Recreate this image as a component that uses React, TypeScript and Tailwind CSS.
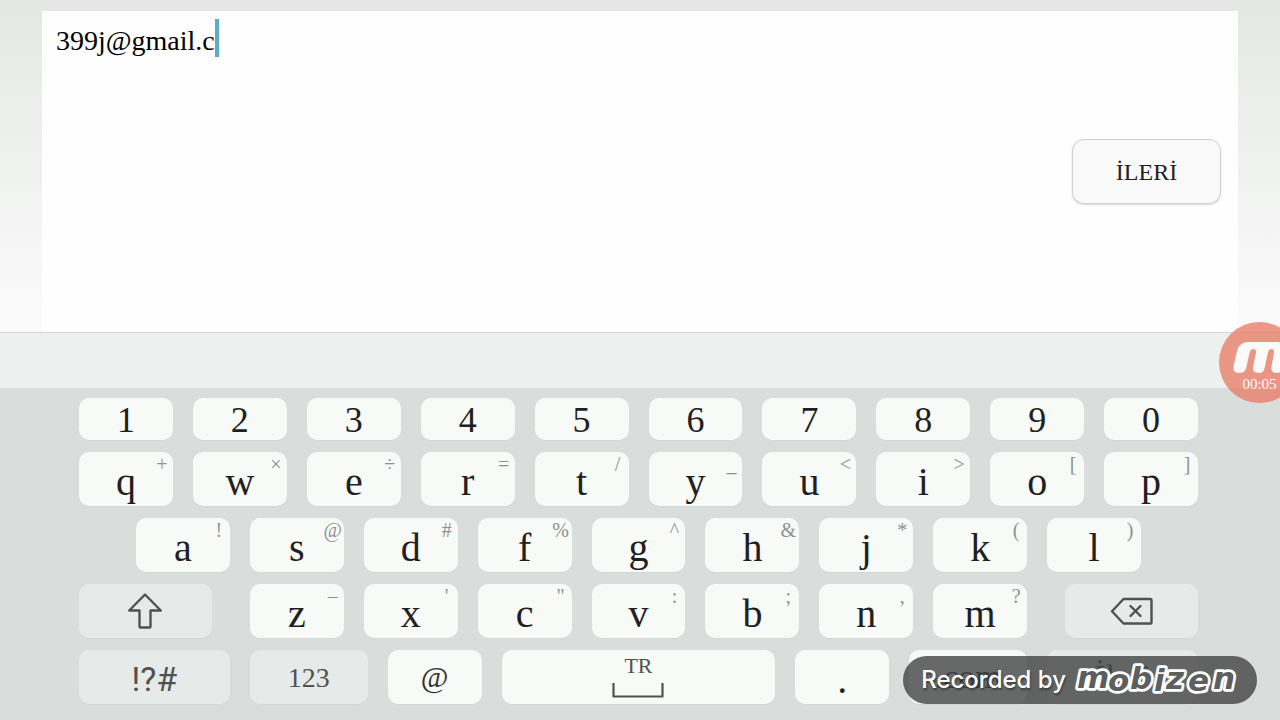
import { useState } from 'react';
import type { ReactNode } from 'react';
import clsx from 'clsx';

type KeyDef = { label: string; hint?: string };

const numberRow = ['1', '2', '3', '4', '5', '6', '7', '8', '9', '0'];

const topRow: KeyDef[] = [
  { label: 'q', hint: '+' },
  { label: 'w', hint: '×' },
  { label: 'e', hint: '÷' },
  { label: 'r', hint: '=' },
  { label: 't', hint: '/' },
  { label: 'y', hint: '_' },
  { label: 'u', hint: '<' },
  { label: 'i', hint: '>' },
  { label: 'o', hint: '[' },
  { label: 'p', hint: ']' },
];

const homeRow: KeyDef[] = [
  { label: 'a', hint: '!' },
  { label: 's', hint: '@' },
  { label: 'd', hint: '#' },
  { label: 'f', hint: '%' },
  { label: 'g', hint: '^' },
  { label: 'h', hint: '&' },
  { label: 'j', hint: '*' },
  { label: 'k', hint: '(' },
  { label: 'l', hint: ')' },
];

const bottomRow: KeyDef[] = [
  { label: 'z', hint: '–' },
  { label: 'x', hint: "'" },
  { label: 'c', hint: '"' },
  { label: 'v', hint: ':' },
  { label: 'b', hint: ';' },
  { label: 'n', hint: ',' },
  { label: 'm', hint: '?' },
];

type KeyProps = {
  children: ReactNode;
  className?: string;
  muted?: boolean;
  label?: string;
  onClick?: () => void;
};

function Key({ children, className, muted, label, onClick }: KeyProps) {
  return (
    <button
      type="button"
      aria-label={label}
      onClick={onClick}
      className={clsx(
        'relative flex min-w-0 items-center justify-center rounded-[10px] shadow-[0_1px_1px_rgba(0,0,0,0.03)]',
        muted ? 'bg-[#e6eae9] text-[#505251]' : 'bg-[#f8faf8] text-[#1f211f]',
        className,
      )}
    >
      {children}
    </button>
  );
}

function LetterKey({ label, hint, onPress }: KeyDef & { onPress: (value: string) => void }) {
  return (
    <Key className="h-[54px] flex-1 pt-1.5 text-[40px] leading-none" onClick={() => onPress(label)}>
      {label}
      <span className="absolute top-0.5 right-px w-5 text-center text-xl leading-5 text-[#8f9190]">
        {hint}
      </span>
    </Key>
  );
}

function ShiftIcon() {
  return (
    <svg width="36" height="38" viewBox="0 0 36 38" fill="none" stroke="currentColor" strokeWidth="2.4" strokeLinejoin="round">
      <path d="M18 2.500 2.200 18.500H12.500V34.500a1 1 0 0 0 1 1h9a1 1 0 0 0 1-1V18.500H33.800Z" />
    </svg>
  );
}

function BackspaceIcon() {
  return (
    <svg width="44" height="30" viewBox="0 0 44 30" fill="none" stroke="currentColor" strokeWidth="2.4" strokeLinejoin="round" strokeLinecap="round">
      <path d="M13.500 3H40.500a1 1 0 0 1 1 1V26.500a1 1 0 0 1-1 1H13.500L2 15.200Z" />
      <path d="M20.500 10 30.500 20M30.500 10 20.500 20" />
    </svg>
  );
}

function SpaceIcon() {
  return (
    <svg width="52" height="16" viewBox="0 0 52 16" fill="none" stroke="currentColor" strokeWidth="2.2" strokeLinejoin="round">
      <path d="M1.500 1V14.500H50.500V1" />
    </svg>
  );
}

function RecorderBubble() {
  return (
    <div className="absolute right-[-20px] bottom-[317px] size-[81px] rounded-full bg-[#ea8069]/80 text-white">
      <svg width="81" height="81" viewBox="0 0 81 81" className="absolute inset-0">
        <path
          fill="#fbfaf8"
          d="M14.500 44.500 18 29Q20 20 30 20H58Q69 20 67.500 30L63.500 46.500Q62.500 51 57.500 51Q51.500 51 52.500 44.500L55 31Q55.500 27 52.500 27Q49.500 27 48.800 31L45.500 46.500Q44.500 51 39.500 51Q33 51 34.200 44.500L37 31Q37.500 27 34.500 27Q31.500 27 30.500 31L27 46.500Q25.500 51 20 51Q13.500 51 14.500 44.500Z"
        />
      </svg>
      <span className="absolute inset-x-0 top-[54px] text-center text-[15px] leading-4">00:05</span>
    </div>
  );
}

function MobizenLogo() {
  return (
    <svg width="175" height="40" viewBox="0 0 175 40" role="img" aria-label="mobizen">
      <text
        fontFamily="DejaVu Sans"
        fontSize="31"
        fontWeight="700"
        fontStyle="italic"
        fill="#5d5f5e"
        stroke="#fff"
        strokeWidth="5.5"
        strokeLinejoin="round"
        paintOrder="stroke"
      >
        <tspan x="3" y="28">m</tspan>
        <tspan x="34" y="31">o</tspan>
        <tspan x="56" y="29">b</tspan>
        <tspan x="80" y="31">i</tspan>
        <tspan x="92" y="29">z</tspan>
        <tspan x="114" y="31">e</tspan>
        <tspan x="139" y="29">n</tspan>
      </text>
    </svg>
  );
}

function RecorderBadge() {
  return (
    <div className="absolute right-[23px] bottom-4 flex h-12 items-center gap-2 rounded-full bg-[#424443]/80 pr-2 pl-[18px]">
      <span className="font-['Inter',sans-serif] text-2xl font-medium whitespace-nowrap text-white [text-shadow:1px_2px_2px_rgba(0,0,0,0.4)]">
        Recorded by
      </span>
      <MobizenLogo />
    </div>
  );
}

export default function App() {
  const [text, setText] = useState('399j@gmail.c');

  const press = (value: string) => setText((current) => current + value);

  return (
    <div className="relative flex min-h-screen flex-col overflow-hidden bg-[#d9dddc] font-['Liberation_Serif',serif]">
      {/* Full screen text entry */}
      <main className="flex flex-1 bg-linear-to-b from-[#e5e7e5] to-[#fafbfa] px-[42px] pt-[11px]">
        <div className="flex flex-1 items-start justify-between bg-[#fdfefd] pr-[17px] pl-3.5">
          <div className="flex items-center pt-2">
            <input
              type="text"
              aria-label="E-posta"
              value={text}
              onChange={(e) => setText(e.target.value)}
              className="field-sizing-content bg-transparent pt-1.5 text-[28px] leading-8 text-black caret-transparent outline-none"
            />
            <span className="h-[38px] w-1 bg-[#58aec6]" />
          </div>
          <button
            type="button"
            className="mt-32 h-[65px] w-[149px] rounded-xl border border-[#cfd1d0] bg-[#f8f9f8] text-2xl text-[#222] shadow-[0_1px_2px_rgba(0,0,0,0.15)]"
          >
            İLERİ
          </button>
        </div>
      </main>

      {/* Suggestion strip */}
      <div className="h-14 border-t border-[#d3d6d5] bg-[#ecf0ef]" />

      <section className="flex flex-col gap-3 pt-2.5 pr-[82px] pb-4 pl-[79px]">
        <div className="flex gap-5">
          {numberRow.map((n) => (
            <Key key={n} className="h-[42px] flex-1 pt-0.5 text-4xl leading-none" onClick={() => press(n)}>
              {n}
            </Key>
          ))}
        </div>

        <div className="flex gap-5">
          {topRow.map((k) => (
            <LetterKey key={k.label} {...k} onPress={press} />
          ))}
        </div>

        <div className="flex gap-5 px-[57px]">
          {homeRow.map((k) => (
            <LetterKey key={k.label} {...k} onPress={press} />
          ))}
        </div>

        <div className="flex gap-[38px]">
          <Key muted label="Shift" className="h-[54px] flex-[133]">
            <ShiftIcon />
          </Key>
          <div className="flex flex-[778] gap-5">
            {bottomRow.map((k) => (
              <LetterKey key={k.label} {...k} onPress={press} />
            ))}
          </div>
          <Key
            muted
            label="Backspace"
            className="h-[54px] flex-[133]"
            onClick={() => setText((current) => current.slice(0, -1))}
          >
            <BackspaceIcon />
          </Key>
        </div>

        <div className="flex gap-5">
          <Key muted className="h-[54px] flex-[151] pt-1 font-['Roboto',sans-serif] text-[34px] leading-none">
            !?#
          </Key>
          <Key muted className="h-[54px] flex-[118] pt-0.5 text-[28px] leading-none">
            123
          </Key>
          <Key className="h-[54px] flex-[94] text-[30px] leading-none text-[#333]" onClick={() => press('@')}>
            @
          </Key>
          <Key
            className="h-[54px] flex-[274] flex-col gap-1.5 text-[22px] leading-5 text-[#505251]"
            onClick={() => press(' ')}
          >
            TR
            <SpaceIcon />
          </Key>
          <Key className="h-[54px] flex-[94] pt-1.5 text-[40px] leading-none" onClick={() => press('.')}>
            .
          </Key>
          <Key className="h-[54px] flex-[118] text-[34px] leading-none" onClick={() => press('.com')}>
            .com
          </Key>
          <Key muted className="h-[54px] flex-[151] text-[34px] leading-none">
            <span className="text-[#1d5a6c]">İleri</span>
          </Key>
        </div>
      </section>

      <RecorderBubble />
      <RecorderBadge />
    </div>
  );
}
